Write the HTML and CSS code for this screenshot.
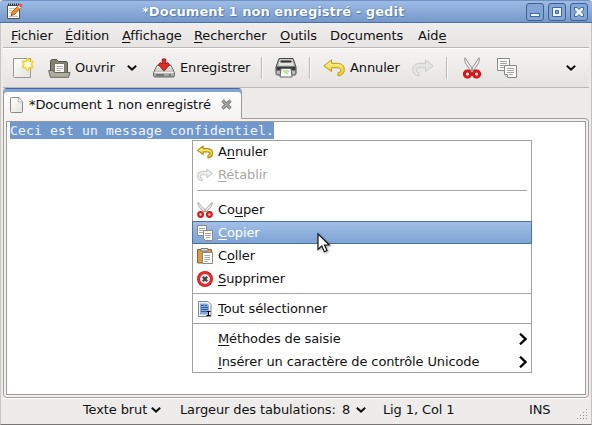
FILE: index.html
```html
<!DOCTYPE html>
<html lang="fr">
<head>
<meta charset="utf-8">
<title>gedit</title>
<link rel="stylesheet" href="styles.css">
</head>
<body>
<svg class="defs" width="0" height="0">
  <defs>
    <linearGradient id="gold" x1="0" y1="0" x2="0" y2="1"><stop offset="0" stop-color="#fff3a0"/><stop offset="1" stop-color="#edc818"/></linearGradient>
    <linearGradient id="paper" x1="0" y1="0" x2="1" y2="1"><stop offset="0" stop-color="#fff"/><stop offset="1" stop-color="#e2e3de"/></linearGradient>
    <linearGradient id="metal" x1="0" y1="0" x2="0" y2="1"><stop offset="0" stop-color="#f3f3f1"/><stop offset="1" stop-color="#999b96"/></linearGradient>
    <symbol id="undo" viewBox="0 0 22 18"><path d="M.8 6.800 8.500.8v3.500h5.500c4.500 0 7.300 2.300 7.300 6.200 0 3.500-2.200 6-6.300 6.500v-3.200c1.800-.4 2.700-1.300 2.700-2.600 0-1.600-1.400-2.400-3.700-2.400H8.500v3.700z" stroke-linejoin="round"/></symbol>
    <symbol id="cut" viewBox="0 0 18 22">
      <path d="M2 .8c-.8 2.200-.1 4.700 1.500 6.800l4.300 6.600 2.200-1.600zM16 .8c.8 2.200.1 4.700-1.500 6.800l-4.300 6.600L8 12.600z" fill="#f1f1ef" stroke="#8e908c"/>
      <g fill="none"><circle cx="4.500" cy="17" r="3" stroke="#a40000" stroke-width="3"/><circle cx="13.500" cy="17" r="3" stroke="#a40000" stroke-width="3"/>
      <circle cx="4.500" cy="17" r="3" stroke="#e5191c" stroke-width="2"/><circle cx="13.500" cy="17" r="3" stroke="#e5191c" stroke-width="2"/></g>
      <circle cx="4.500" cy="17" r="1.500" fill="#fbe4e4"/><circle cx="13.500" cy="17" r="1.500" fill="#fbe4e4"/>
    </symbol>
    <symbol id="copy" viewBox="0 0 20 20">
      <path d="M.5.500h12v12H.5z" fill="#fbfbfa" stroke="#888a85"/><path d="M3 3.500h7M3 5.500h7M3 7.500h7M3 9.500h4" stroke="#a3a5a1"/>
      <path d="M7.500 7.500h12v12h-9l-3-3z" fill="#fbfbfa" stroke="#888a85"/><path d="M10 10.500h7M10 12.500h7M10 14.500h7M12 16.500h4" stroke="#a3a5a1"/>
      <path d="M7.500 16.500h3v3" fill="#ddd" stroke="#888a85"/>
    </symbol>
    <symbol id="copy-small" viewBox="0 0 16 16">
      <path d="M.5.500h9v10h-9z" fill="#fbfbfa" stroke="#888a85"/><path d="M2 3.500h6M2 5.500h6M2 7.500h4" stroke="#a3a5a1"/>
      <path d="M6.500 5.500h9v10h-7l-2-2z" fill="#fbfbfa" stroke="#888a85"/><path d="M8 8.500h6M8 10.500h6M9 12.500h4" stroke="#a3a5a1"/>
    </symbol>
    <symbol id="down" viewBox="0 0 10 6"><path d="M.8.800 5 4.600 9.200.8" fill="none" stroke="#111" stroke-width="2"/></symbol>
    <symbol id="right" viewBox="0 0 8 12"><path d="M1 .7 6.500 6 1 11.300" fill="none" stroke="#000" stroke-width="2.300"/></symbol>
  </defs>
</svg>
<div class="window">
  <header class="titlebar">
    <svg class="app-icon" viewBox="0 0 17 17">
      <path d="M1.500 2.500h12v13h-12z" fill="#f9f9f7" stroke="#55534f"/><path d="M2 1.500h11" stroke="#333" stroke-width="2" stroke-dasharray="1 1"/>
      <path d="M3 5.500h8M3 7.500h7M3 9.500h4M3 13.500h9" stroke="#bfc0bd"/>
      <path d="m5 12.500 1-3.500 6.500-6.500 2.300 2.300L8.500 11.500z" fill="#f58b1c" stroke="#a85a15" stroke-width=".8"/><path d="m11.500 3.500 1.300-1.300 2.300 2.300-1.300 1.300z" fill="#ddd"/>
      <path d="m12.700 2.200 1.400-1.400c1.500-.5 2.600.8 2.200 2.200l-1.300 1.400z" fill="#ef4a55"/><path d="m5 12.500.5-1.600 1.100 1.100z" fill="#222"/>
    </svg>
    <h1>*Document 1 non enregistré - gedit</h1>
    <div class="controls">
      <svg viewBox="0 0 18 18"><rect class="btn" x=".5" y=".5" width="17" height="17" rx="2.500"/><rect class="glyph" x="4.500" y="10.500" width="9" height="3"/></svg>
      <svg viewBox="0 0 18 18"><rect class="btn" x=".5" y=".5" width="17" height="17" rx="2.500"/><path class="glyph" fill-rule="evenodd" d="M4.500 4.500h9v9h-9zM7.500 7.500h3v3h-3z"/></svg>
      <svg viewBox="0 0 18 18"><rect class="btn" x=".5" y=".5" width="17" height="17" rx="2.500"/><path class="glyph" d="M4.500 4.500h2.500l2 2 2-2h2.500v2.500l-2 2 2 2v2.500H11l-2-2-2 2H4.500V11l2-2-2-2z"/></svg>
    </div>
  </header>
  <div class="frame">
    <nav class="menubar">
      <span class="m1"><u>F</u>ichier</span><span class="m2"><u>É</u>dition</span><span class="m3"><u>A</u>ffichage</span><span class="m4"><u>R</u>echercher</span><span class="m5"><u>O</u>utils</span><span class="m6">Do<u>c</u>uments</span><span class="m7">Aid<u>e</u></span>
    </nav>
    <div class="toolbar">
      <svg class="new" viewBox="0 0 22 22"><path d="M1.500 1.500h17v19h-16q-1 0-1-1z" fill="url(#paper)" stroke="#94968f"/><path d="m15.800 1.400 1.600 2.800 3.500.2-1.400 3 1.200 3.200-3.300.1-1.800 2.700-1.900-2.700-3.300-.2 1.400-3.100-1.200-3 3.400-.2z" fill="#fffef0" stroke="#f1d72b" stroke-width="1.700" stroke-linejoin="round"/></svg>
      <svg class="open" viewBox="0 0 23 19"><path d="M2.500 15V2.500q0-2 2-2h4l2 2H18q1.500 0 1.500 1.500v11z" fill="#82846f" stroke="#555748"/><path d="M6.500 4.500h10v10h-10z" fill="#fff" stroke="#77796b"/><path d="M8.500 7.500H15M8.500 9.500H15M8.500 11.500H13" stroke="#b5b6b1"/><path d="M.7 11.500h4l2 2H22l-1.500 4.800H2.500z" fill="#aeb09d" stroke="#65675a"/></svg>
      <span class="t-open">Ouvrir</span>
      <svg class="down tb-down"><use href="#down"/></svg>
      <svg class="save" viewBox="0 0 22 20"><path d="M4 7.500h14l3.500 7v3q0 1.500-1.500 1.500H2Q.5 19 .5 17.500v-3z" fill="url(#metal)" stroke="#686a66"/><path d="M1.500 14.500h19" stroke="#eee"/><path d="M3 17h8M16 17h2" stroke="#666" stroke-width="1.500"/><path d="M9.300 1h3.400v5l2-1.300 2 1.800L11 13 5.300 6.500l2-1.800 2 1.300z" fill="#e52a23" stroke="#9f1513"/></svg>
      <span class="t-save">Enregistrer</span>
      <i class="vsep"></i>
      <svg class="print" viewBox="0 0 22 20"><path d="M4 .5h14l3 8.500v6.500q0 1.500-1.500 1.500h-17Q1 17 1 15.500V9z" fill="#b9bbb7" stroke="#444"/><path d="M5 1.500h12l1.500 6h-15z" fill="#e5e5e3"/><path d="M5.500 3.500h11" stroke="#333" stroke-width="2.200"/><path d="M1.500 8.500h19v4h-19z" fill="#3b3c3b"/><path d="M6 10.500h10l1 8.500H5z" fill="#fafafa" stroke="#666"/><path d="m8 12 5 4M11 12l3 2" stroke="#a8d58f" stroke-width="1.500"/></svg>
      <i class="vsep"></i>
      <svg class="undo"><use href="#undo"/></svg>
      <span class="t-undo">Annuler</span>
      <svg class="redo"><use href="#undo"/></svg>
      <i class="vsep s3"></i>
      <svg class="cut"><use href="#cut"/></svg>
      <svg class="copy"><use href="#copy"/></svg>
      <svg class="down tb-more"><use href="#down"/></svg>
    </div>
    <div class="tabs">
      <div class="tab">
        <svg class="doc" viewBox="0 0 14 16"><path d="M1.500.5H9l3.500 4v10q0 1-1 1h-10q-1 0-1-1v-13q0-1 1-1z" fill="url(#paper)" stroke="#888a85"/><path d="M8.500 1v4h4" fill="#fff" stroke="#b5b6b2"/></svg>
        <span>*Document 1 non enregistré</span>
        <svg class="close" viewBox="0 0 11 11"><path d="M1.500 1.500 9.500 9.500M9.500 1.500 1.500 9.500" stroke="#777" stroke-width="3.300"/><path d="M1.500 1.500 9.500 9.500M9.500 1.500 1.500 9.500" stroke="#aaa" stroke-width="1.500"/></svg>
      </div>
    </div>
    <main class="notebook"><div class="editor"><span class="selection">Ceci est un message confidentiel.</span></div></main>
    <footer class="status">
      <i class="cell c1"></i>
      <div class="cell c2"><span>Texte brut</span><svg class="down"><use href="#down"/></svg></div>
      <div class="cell c3"><span>Largeur des tabulations:</span><b>8</b><svg class="down"><use href="#down"/></svg></div>
      <div class="cell c4"><span>Lig 1, Col 1</span></div>
      <div class="cell c5"><span>INS</span></div>
      <svg class="grip" viewBox="0 0 11 11"><path d="M9 .5h1M6 3.500h1M9 3.500h1M3 6.500h1M6 6.500h1M9 6.500h1M0 9.500h1M3 9.500h1M6 9.500h1M9 9.500h1" stroke="#9a9895"/></svg>
    </footer>
  </div>
  <div class="context">
    <div class="item"><svg class="ic gold"><use href="#undo"/></svg><span>A<u>n</u>nuler</span></div>
    <div class="item disabled"><svg class="ic pale"><use href="#undo"/></svg><span><u>R</u>établir</span></div>
    <hr class="inset">
    <div class="item"><svg class="ic" viewBox="0 0 16 16"><path d="M1 .5c-.3 2 .3 3.500 1.500 4.700L7 10l1.700-1.500zM15 .5c.3 2-.3 3.500-1.500 4.700L9 10 7.300 8.500z" fill="#eee" stroke="#999b96" stroke-width=".9"/><g fill="#fbe0e0" stroke="#d8181b" stroke-width="2.200"><circle cx="3.600" cy="12.500" r="2.300"/><circle cx="12.400" cy="12.500" r="2.300"/></g></svg><span>Co<u>u</u>per</span></div>
    <div class="item active"><svg class="ic"><use href="#copy-small"/></svg><span><u>C</u>opier</span></div>
    <div class="item"><svg class="ic" viewBox="0 0 16 16"><path d="M.5 1.500h14v13.500H.5z" fill="#d69b43" stroke="#946322"/><path d="M4 .5h7v2.500H4z" fill="#ddd" stroke="#777"/><path d="M5.500 4.500h10v11h-10z" fill="#fff" stroke="#888a85"/><path d="M7.500 7.500H13M7.500 9.500H13M7.500 11.500H13M7.500 13.500H11" stroke="#aaa"/></svg><span>C<u>o</u>ller</span></div>
    <div class="item"><svg class="ic" viewBox="0 0 16 16"><circle cx="8" cy="8" r="8" fill="#d6171b"/><circle cx="8" cy="8" r="6.300" fill="none" stroke="#f04444"/><circle cx="8" cy="8" r="5" fill="#e8e8e6"/><path d="m5.800 5.800 4.400 4.400M10.200 5.800 5.800 10.200" stroke="#444" stroke-width="2.200"/></svg><span><u>S</u>upprimer</span></div>
    <hr>
    <div class="item"><svg class="ic" viewBox="0 0 16 16"><path d="M1.500.5h9.500l3 3v12H1.500z" fill="#f1f2f0" stroke="#888a85"/><path d="M3 2.500h7l2 2v9H3z" fill="#82aadc"/><path d="M4 4.500h3M4 6.500h7M4 8.500h7M4 10.500h5M8 4.500h2" stroke="#315f9b"/><path d="M9.500 10.500h4M9.500 14.500h4M11.500 10.500v4" stroke="#000"/></svg><span><u>T</u>out sélectionner</span></div>
    <hr>
    <div class="item"><i class="ic"></i><span><u>M</u>éthodes de saisie</span><svg class="right"><use href="#right"/></svg></div>
    <div class="item"><i class="ic"></i><span><u>I</u>nsérer un caractère de contrôle Unicode</span><svg class="right"><use href="#right"/></svg></div>
  </div>
  <svg class="cursor" viewBox="0 0 14 21"><path d="M1 .9v15.500l3.800-3.500 2.500 5.800 2.700-1.200-2.500-5.500h4.800z" fill="#fff" stroke="#111" stroke-width="1.200"/></svg>
</div>
</body>
</html>
```
FILE: styles.css
```css
* { box-sizing: border-box; }
body { margin: 0; font: 13px/16px "DejaVu Sans", sans-serif; letter-spacing: -.12px; color: #111; overflow: hidden; }
svg { display: block; flex: none; overflow: visible; }
.defs { position: absolute; }
span, i { flex: none; white-space: nowrap; }
u { text-decoration: underline; text-decoration-thickness: 1px; text-underline-offset: 2px; text-decoration-skip-ink: none; }
.window { position: relative; width: 592px; height: 425px; background: #edeceb; display: flex; flex-direction: column; }
.titlebar { height: 23px; flex: none; display: flex; align-items: center; background: linear-gradient(#9dbbe5, #7699cb); border-top: 1px solid #6f91c3; border-bottom: 1px solid #4670a9; border-radius: 4px 4px 0 0; padding: 0 4px 0 6px; }
.app-icon { width: 17px; height: 17px; }
h1 { margin: 0 0 0 119px; flex: 1; font-size: 13px; line-height: 16px; letter-spacing: .06px; color: #fff; text-shadow: 0 0 1px #3d649b, 1px 1px 1px #557bb0; white-space: nowrap; }
.controls { display: flex; gap: 4px; }
.controls svg { width: 18px; height: 18px; }
.btn { fill: #83a5d5; stroke: #3f6190; }
.glyph { fill: #eef4fd; stroke: #41679f; }
.frame { height: 402px; flex: none; display: flex; flex-direction: column; border-left: 1px solid #c9c6c4; border-right: 1px solid #c4c1bf; border-bottom: 1px solid #777472; padding: 0 2px; }
.menubar { height: 25px; flex: none; display: flex; align-items: center; background: linear-gradient(#efeeed, #e6e5e4); border-bottom: 1px solid #bab8b6; padding: 2px 0 0 8px; }
.m1 { width: 54px; } .m2 { width: 57px; } .m3 { width: 72px; } .m4 { width: 86px; } .m5 { width: 50px; } .m6 { width: 88px; }
.toolbar { height: 40px; flex: none; display: flex; align-items: center; background: linear-gradient(#f5f4f3, #e4e3e2); border-top: 1px solid #fff; border-bottom: 1px solid #bab8b6; padding-left: 9px; }
.new { width: 22px; height: 22px; }
.open { width: 23px; height: 19px; margin-left: 14px; }
.t-open { width: 52px; margin-left: 4px; }
.down { width: 10px; height: 6px; }
.save { width: 22px; height: 20px; margin-left: 16px; }
.t-save { width: 81px; margin-left: 5px; }
.vsep { width: 2px; height: 22px; border-left: 1px solid #bdbbb9; border-right: 1px solid #fafafa; }
.print { width: 22px; height: 20px; margin: 0 12px; }
.undo { width: 22px; height: 18px; margin-left: 12px; fill: url(#gold); stroke: #bd9a12; }
.t-undo { width: 62px; margin-left: 5px; }
.redo { width: 22px; height: 18px; transform: scaleX(-1); fill: #e4e4e2; stroke: #c9cac7; }
.s3 { margin-left: 12px; }
.cut { width: 18px; height: 22px; margin-left: 15px; }
.copy { width: 20px; height: 20px; margin-left: 16px; }
.tb-more { margin-left: 49px; }
.tabs { height: 30px; flex: none; display: flex; align-items: flex-start; }
.tab { width: 239px; height: 31px; z-index: 1; display: flex; align-items: center; border: 1px solid #9a9997; border-top: 1px solid #41699f; border-bottom: 0; border-radius: 4px 4px 0 0; box-shadow: inset 0 3px #83a6d5; background: linear-gradient(#fff, #f4f3f2); padding: 1px 0 0 6px; }
.doc { width: 14px; height: 16px; margin-right: 5px; }
.tab span { width: 192px; }
.close { width: 11px; height: 11px; }
.notebook { height: 280px; flex: none; border: 1px solid #a09f9d; border-radius: 0 4px 4px 4px; padding: 2px; background: #f3f2f1; }
.editor { height: 100%; border: 1px solid #9a9997; background: #fff; padding: 0 0 0 3px; }
.selection { display: block; width: 264px; height: 17px; background: #7198cd; color: #f2f6fc; font: 13px/17px "DejaVu Sans Mono", monospace; letter-spacing: .17px; }
.status { height: 26px; flex: none; display: flex; border-top: 1px solid #fff; }
.cell { display: flex; align-items: center; flex: none; padding-bottom: 3px; }
.c1 { width: 65px; } .c2 { width: 100px; padding-left: 15px; } .c3 { width: 204px; padding-left: 12px; } .c4 { width: 146px; padding-left: 11px; } .c5 { width: 58px; padding-left: 11px; }
.c2 span { width: 68px; } .c3 span { width: 162px; } .c3 b { width: 14px; font-weight: normal; }
.grip { width: 11px; height: 11px; align-self: flex-end; margin: 0 0 4px 1px; }
.context { position: absolute; left: 192px; top: 140px; width: 340px; height: 233px; background: #fff; box-shadow: inset 0 0 0 1px #a1a09e; }
.item { display: flex; align-items: center; height: 23px; padding: 0 5px; }
.ic { width: 16px; height: 16px; margin-right: 5px; }
.gold { fill: url(#gold); stroke: #b49112; stroke-width: 1.6; }
.pale { fill: #eee; stroke: #c9cac7; stroke-width: 1.4; transform: scaleX(-1); }
.disabled { color: #aaa8a5; }
.active { color: #fff; background: linear-gradient(#a3c0e7, #7da2d4); box-shadow: inset 0 0 0 1px #4b719f; }
.right { width: 8px; height: 12px; margin-left: auto; }
hr { height: 7px; margin: 0; border: 0; background: linear-gradient(#a5a3a1, #a5a3a1) 0 3px / 100% 1px no-repeat; }
.inset { height: 12px; margin: 0 5px; background-position: 0 4px; }
.cursor { position: absolute; left: 317px; top: 233px; width: 14px; height: 21px; filter: drop-shadow(1px 1px 1px #0005); }
```
